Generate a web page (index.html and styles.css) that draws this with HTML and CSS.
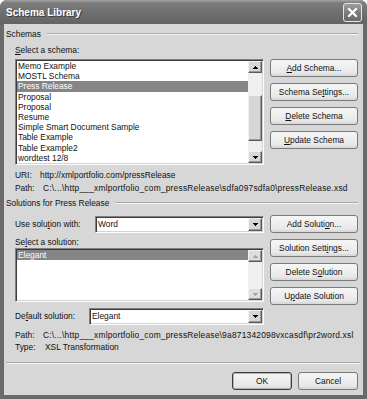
FILE: index.html
```html
<!DOCTYPE html>
<html>
<head>
<meta charset="utf-8">
<link rel="stylesheet" href="styles.css">
</head>
<body>
<div class="window">
  <div class="titlebar">
    <span class="title">Schema Library</span>
    <span class="close"><svg width="11" height="11" viewBox="0 0 11 11"><path d="M2 2L9 9M9 2L2 9" stroke="#fff" stroke-width="2.2" stroke-linecap="square"/></svg></span>
  </div>
  <div class="client">
    <div class="group-head"><span>Schemas</span><span class="rule"></span></div>
    <div class="section">
      <div class="label"><u>S</u>elect a schema:</div>
      <div class="schema-row">
        <div class="listbox schema-list">
          <div class="items">
            <div class="item">Memo Example</div>
            <div class="item">MOSTL Schema</div>
            <div class="item selected">Press Release</div>
            <div class="item">Proposal</div>
            <div class="item">Proposal</div>
            <div class="item">Resume</div>
            <div class="item">Simple Smart Document Sample</div>
            <div class="item">Table Example</div>
            <div class="item">Table Example2</div>
            <div class="item">wordtest 12/8</div>
          </div>
          <div class="vscroll">
            <div class="sb-btn"><svg class="arrow" width="5" height="3" viewBox="0 0 5 3"><path d="M2 0h1v1h1v1h1v1H0V2h1V1h1z"/></svg></div>
            <div class="track-a"></div>
            <div class="thumb"></div>
            <div class="track-b"></div>
            <div class="sb-btn"><svg class="arrow" width="5" height="3" viewBox="0 0 5 3"><path d="M0 0h5v1H4v1H3v1H2V2H1V1H0z"/></svg></div>
          </div>
        </div>
        <div class="btncol">
          <button class="btn"><span><u>A</u>dd Schema...</span></button>
          <button class="btn"><span>Schema Se<u>t</u>tings...</span></button>
          <button class="btn"><span><u>D</u>elete Schema</span></button>
          <button class="btn"><span><u>U</u>pdate Schema</span></button>
        </div>
      </div>
      <div class="info">
        <div class="line"><span class="k k-uri">URI:</span><span>http://xmlportfolio.com/pressRelease</span></div>
        <div class="line"><span class="k k-path">Path:</span><span class="pathval">C:\...\http___xmlportfolio_com_pressRelease\sdfa097sdfa0\pressRelease.xsd</span></div>
      </div>
    </div>

    <div class="group-head gh2"><span>Solutions for Press Release</span><span class="rule"></span></div>
    <div class="section">
      <div class="use-row">
        <span class="lab lab-use">Use solu<u>t</u>ion with:</span>
        <div class="combo combo-use">
          <span class="val">Word</span>
          <div class="sb-btn"><svg class="arrow" width="5" height="3" viewBox="0 0 5 3"><path d="M0 0h5v1H4v1H3v1H2V2H1V1H0z"/></svg></div>
        </div>
        <button class="btn"><span>Add Soluti<u>o</u>n...</span></button>
      </div>
      <div class="sol-row">
        <div class="sol-left">
          <div class="label">Se<u>l</u>ect a solution:</div>
          <div class="listbox sol-list">
            <div class="items">
              <div class="item selected">Elegant</div>
            </div>
            <div class="vscroll disabled">
              <div class="sb-btn"><svg class="arrow" width="5" height="3" viewBox="0 0 5 3"><path d="M2 0h1v1h1v1h1v1H0V2h1V1h1z"/></svg></div>
              <div class="track-a"></div>
              <div class="sb-btn"><svg class="arrow" width="5" height="3" viewBox="0 0 5 3"><path d="M0 0h5v1H4v1H3v1H2V2H1V1H0z"/></svg></div>
            </div>
          </div>
        </div>
        <div class="btncol btncol-sol">
          <button class="btn"><span>Solution Sett<u>i</u>ngs...</span></button>
          <button class="btn"><span>Delete S<u>o</u>lution</span></button>
          <button class="btn"><span>U<u>p</u>date Solution</span></button>
        </div>
      </div>
      <div class="default-row">
        <span class="lab lab-def">De<u>f</u>ault solution:</span>
        <div class="combo combo-def">
          <span class="val">Elegant</span>
          <div class="sb-btn"><svg class="arrow" width="5" height="3" viewBox="0 0 5 3"><path d="M0 0h5v1H4v1H3v1H2V2H1V1H0z"/></svg></div>
        </div>
      </div>
      <div class="info info2">
        <div class="line"><span class="k k-path">Path:</span><span class="pathval">C:\...\http___xmlportfolio_com_pressRelease\9a871342098vxcasdf\pr2word.xsl</span></div>
        <div class="line"><span class="k k-type">Type:</span><span>XSL Transformation</span></div>
      </div>
    </div>

    <div class="separator"></div>
    <div class="footer">
      <button class="btn btn-small btn-default"><span>OK</span></button>
      <button class="btn btn-small"><span>Cancel</span></button>
    </div>
  </div>
</div>
</body>
</html>
```

FILE: styles.css
```css
* { box-sizing: border-box; }
html, body { margin: 0; padding: 0; background: #ffffff; }
body {
  font-family: "Liberation Sans", Arial, sans-serif;
  font-size: 8.4px;
  color: #111;
}
.window {
  width: 367px;
  height: 399px;
  background: #6a6a6a;
  border-radius: 7px 7px 0 0;
  display: flex;
  flex-direction: column;
  overflow: hidden;
}
.titlebar {
  height: 24px;
  flex: none;
  display: flex;
  align-items: center;
  justify-content: space-between;
  padding: 0 5px 0 6px;
  background: linear-gradient(#a2a2a2, #7c7c7c 3px, #707070 50%, #646464);
}
.title {
  color: #fff;
  font-weight: bold;
  font-size: 10px;
  text-shadow: 1px 1px #3c3c3c;
  padding-top: 1px;
}
.close {
  width: 19px;
  height: 19px;
  border: 1px solid #e6e6e6;
  border-radius: 3px;
  background: linear-gradient(#9c9c9c, #777 60%, #6a6a6a);
  display: flex;
  align-items: center;
  justify-content: center;
}
.client {
  flex: 1;
  margin: 0 4px 4px 4px;
  background: #d7d7d7;
  padding: 0 5px 0 2px;
}
.group-head {
  display: flex;
  align-items: center;
  height: 20px;
  gap: 6px;
}
.gh2 { height: 16px; }
.group-head .rule {
  flex: 1;
  border-top: 1px solid #a8a8a8;
  border-bottom: 1px solid #f4f4f4;
}
.section { margin-left: 9px; }
.label { height: 12px; line-height: 12px; }
u { text-decoration: underline; text-underline-offset: 1px; }

.schema-row {
  display: flex;
  justify-content: space-between;
  margin-top: 3px;
}
.listbox {
  width: 249px;
  background: #fff;
  border: 1px solid;
  border-color: #808080 #fdfdfd #fdfdfd #808080;
  box-shadow: inset 1px 1px #3c3c3c, inset -1px -1px #d4d4d4;
  padding: 1px;
  display: flex;
}
.schema-list { height: 106px; }
.sol-list { height: 54px; }
.items {
  flex: 1;
  overflow: hidden;
}
.item {
  height: 10.2px;
  line-height: 10.2px;
  padding-left: 1px;
  white-space: nowrap;
}
.item.selected { background: #858585; color: #fff; }

.vscroll {
  width: 14px;
  flex: none;
  display: flex;
  flex-direction: column;
  background: #efefef;
}
.sb-btn {
  height: 12px;
  width: 14px;
  flex: none;
  background: #d6d6d6;
  border: 1px solid;
  border-color: #f2f2f2 #5a5a5a #5a5a5a #f2f2f2;
  box-shadow: inset -1px -1px #999;
  display: flex;
  align-items: center;
  justify-content: center;
}
.arrow { display: block; fill: #000; }
.track-a { height: 22px; flex: none; }
.sol-list .track-a { flex: 1; }
.thumb {
  height: 46px;
  flex: none;
  background: #d6d6d6;
  border: 1px solid;
  border-color: #f2f2f2 #5a5a5a #5a5a5a #f2f2f2;
  box-shadow: inset -1px -1px #999;
}
.track-b { flex: 1; }
.vscroll.disabled .arrow { fill: #a4a4a4; }
.vscroll.disabled .sb-btn { background: #dedede; }

.btncol {
  width: 88px;
  display: flex;
  flex-direction: column;
  gap: 6px;
}
.btn {
  width: 88px;
  height: 18px;
  padding: 0;
  margin: 0;
  font: inherit;
  color: #111;
  border: 1px solid #7a7a7a;
  border-radius: 3px;
  background: linear-gradient(#f6f6f6, #e8e8e8 80%, #d6d6d6);
  display: flex;
  align-items: center;
  justify-content: center;
  white-space: nowrap;
}
.btn-small { width: 60px; }
.btn-default { border-color: #3e3e3e; box-shadow: inset 0 0 0 1px #b4b4b4; }

.info { margin-top: 4px; }
.info .line { height: 13px; line-height: 13px; white-space: nowrap; }
.info2 .line { height: 12px; line-height: 12px; }
.k { display: inline-block; }
.k-uri { width: 25px; }
.k-path { width: 28px; }
.k-type { width: 30px; }
.pathval { letter-spacing: 0.22px; }

.use-row {
  display: flex;
  align-items: flex-start;
  margin-top: 4px;
  height: 18px;
}
.lab { display: inline-block; height: 17px; line-height: 17px; margin-top: 1px; }
.lab-use { width: 80px; }
.lab-def { width: 74px; margin-top: 0; }
.combo {
  height: 17px;
  background: #fff;
  border: 1px solid;
  border-color: #808080 #fdfdfd #fdfdfd #808080;
  box-shadow: inset 1px 1px #3c3c3c, inset -1px -1px #d4d4d4;
  padding: 1px;
  display: flex;
}
.combo-use { width: 169px; margin-top: 1px; }
.combo-def { width: 175px; }
.combo .val { flex: 1; padding-left: 1px; line-height: 13px; }
.combo .sb-btn { height: 13px; }
.use-row .btn { margin-left: auto; }

.sol-row {
  display: flex;
  justify-content: space-between;
  margin-top: 3px;
}
.btncol-sol { padding-top: 3px; }
.default-row {
  display: flex;
  margin-top: 3px;
  height: 17px;
}
.info2 { margin-top: 4px; }

.separator {
  margin-top: 9px;
  margin-right: -2px;
  border-top: 1px solid #a8a8a8;
  border-bottom: 1px solid #f4f4f4;
}
.footer {
  display: flex;
  justify-content: flex-end;
  gap: 6px;
  margin-top: 8px;
}
```
